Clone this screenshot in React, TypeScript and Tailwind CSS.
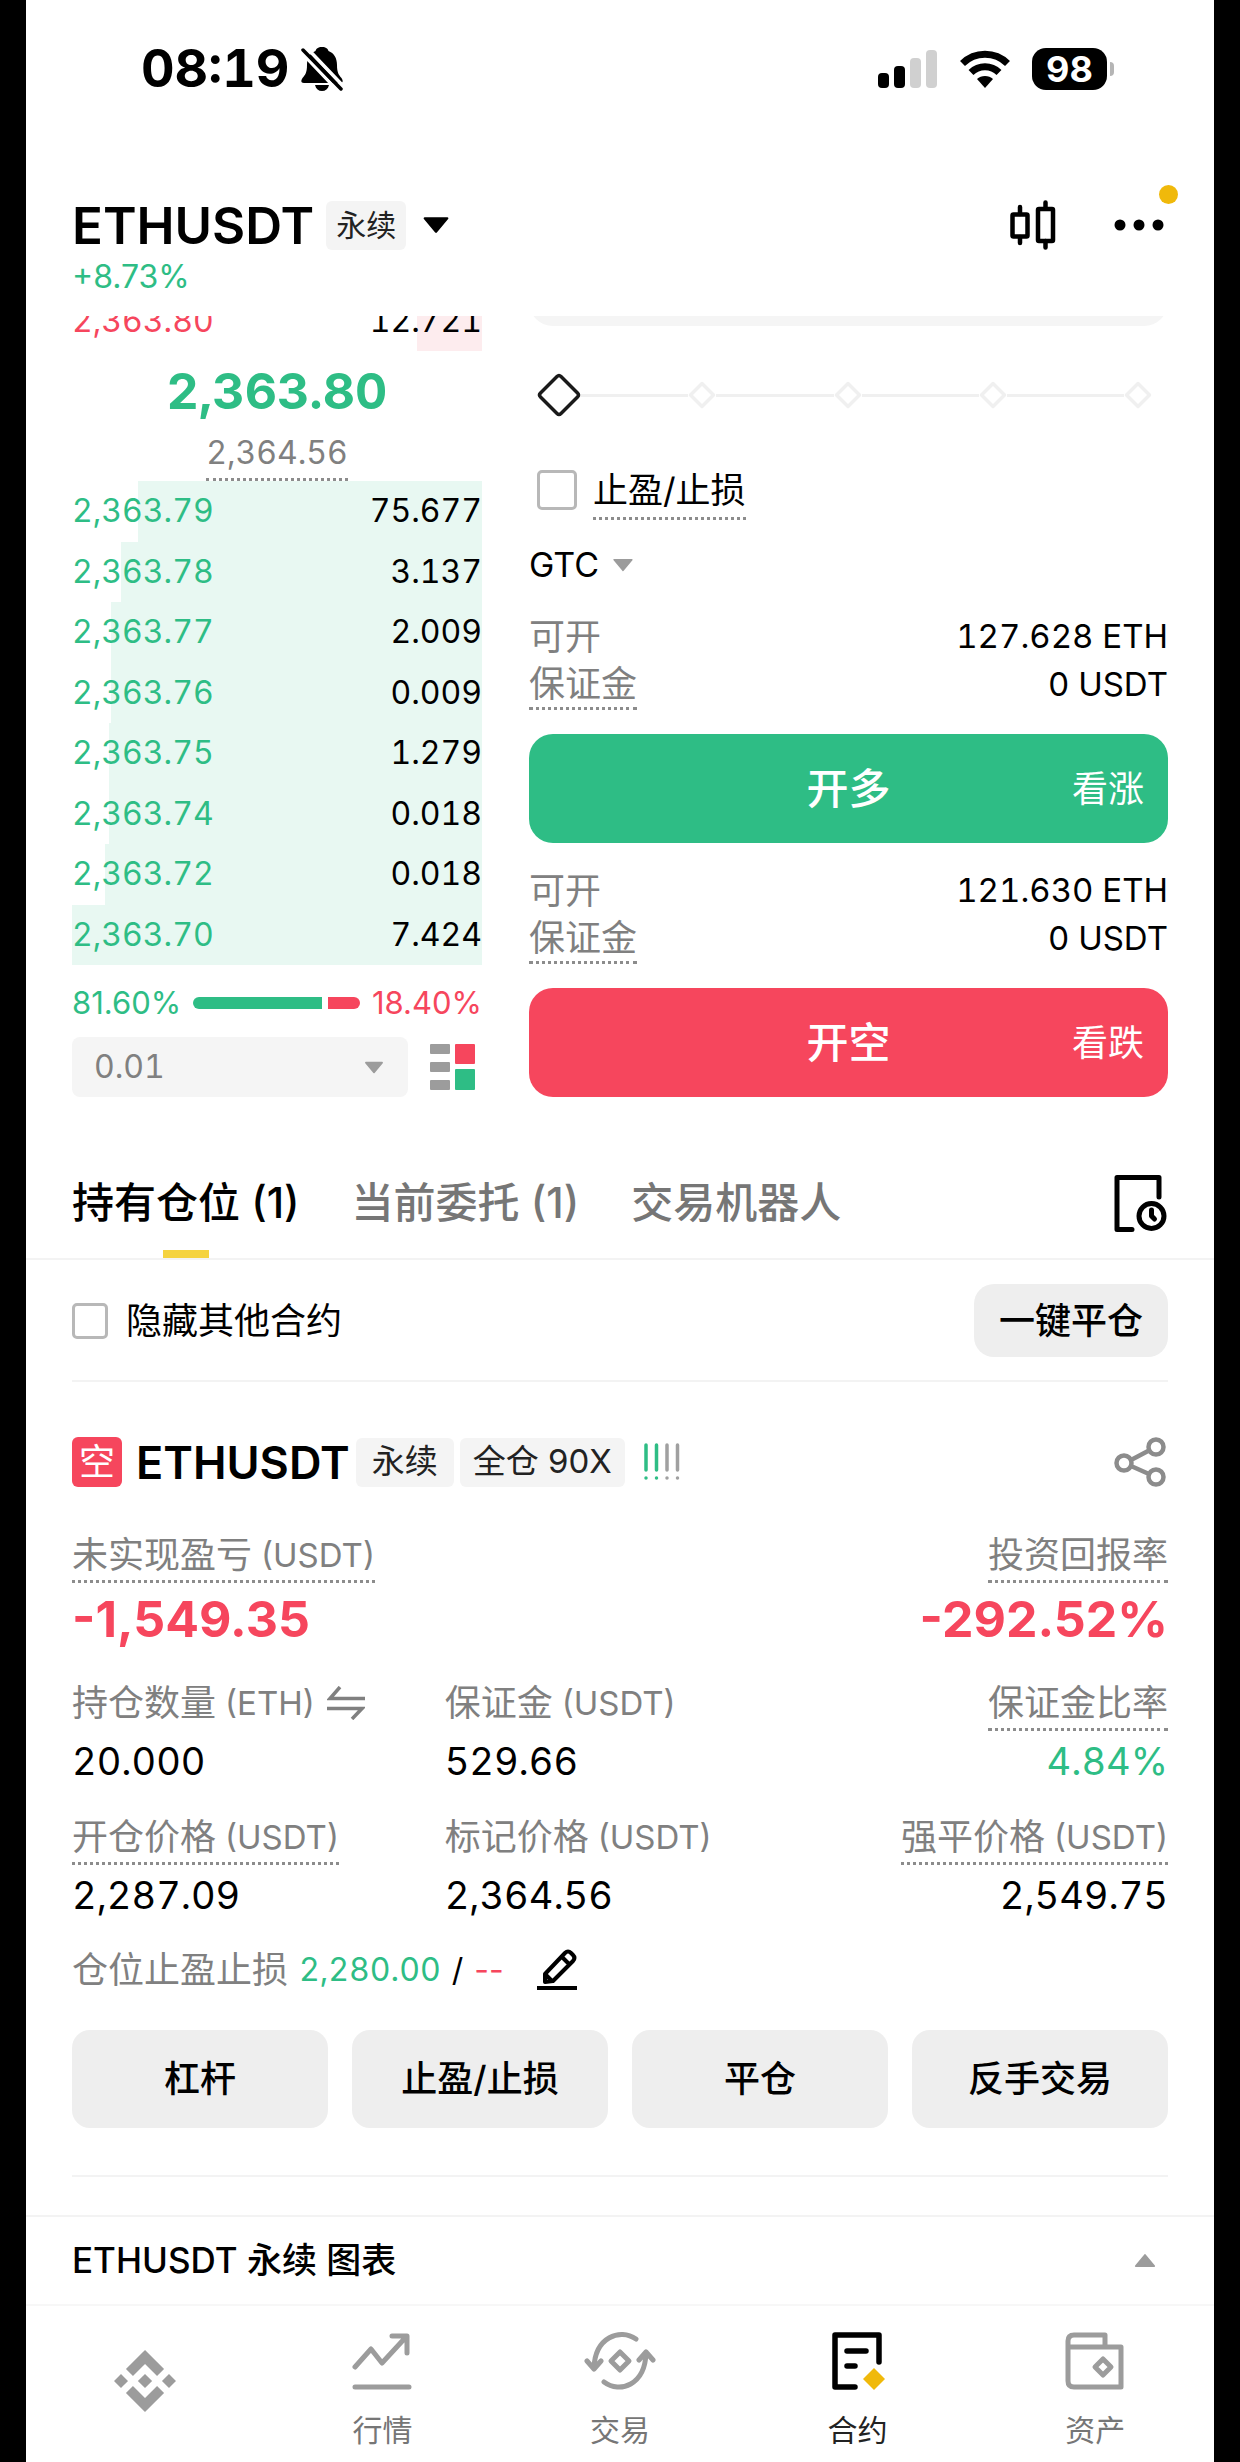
import { ReactNode } from "react";

type TOrder = { price: string; amount: string; depth: number };

const asks: TOrder[] = [{ price: "2,363.80", amount: "12.721", depth: 16 }];

const bids: TOrder[] = [
  { price: "2,363.79", amount: "75.677", depth: 84 },
  { price: "2,363.78", amount: "3.137", depth: 88 },
  { price: "2,363.77", amount: "2.009", depth: 90.5 },
  { price: "2,363.76", amount: "0.009", depth: 90.5 },
  { price: "2,363.75", amount: "1.279", depth: 91 },
  { price: "2,363.74", amount: "0.018", depth: 91 },
  { price: "2,363.72", amount: "0.018", depth: 92 },
  { price: "2,363.70", amount: "7.424", depth: 100 },
];

const Triangle = ({ className, up }: { className: string; up?: boolean }) => (
  <svg viewBox="0 0 24 16" className={className} fill="currentColor" stroke="currentColor" strokeWidth="2" strokeLinejoin="round">
    <path d={up ? "M2 14h20L12 2z" : "M2 2h20L12 14z"} />
  </svg>
);

const StatusBar = () => (
  <div className="flex h-[138px] items-center justify-between pl-[115px] pr-[100px]">
    <div className="flex items-center gap-3">
      <span className="text-[52px] font-bold leading-none tabular-nums">08:19</span>
      <svg viewBox="0 0 42 44" className="h-11 w-[42px]">
        <path
          d="M21 0c-4 0-6 2-6.500 4C9 6 6 11 6 18c0 8-2 10-4.500 13C-.5 34 0 36 3 36h36c3 0 3.500-2 1.500-5C38 28 36 26 36 18c0-7-3-12-8.500-14C27 2 25 0 21 0z"
          fill="black"
        />
        <path d="M14 38h14c-1 4-3.500 6-7 6s-6-2-7-6z" fill="black" />
        <path d="M-1 4l40 42M5 0l40 42" stroke="white" strokeWidth="3.500" />
        <path d="M2 3l38 39" stroke="black" strokeWidth="3.500" strokeLinecap="round" />
      </svg>
    </div>
    <div className="flex items-center">
      <svg viewBox="0 0 60 38" className="mr-[22px] h-[38px] w-[60px]">
        <rect x="0" y="23" width="11" height="15" rx="4" />
        <rect x="16" y="16" width="11" height="22" rx="4" />
        <rect x="32" y="8" width="11" height="30" rx="4" fill="#d0d0d0" />
        <rect x="48" y="0" width="11" height="38" rx="4" fill="#d0d0d0" />
      </svg>
      <svg viewBox="0 0 50 38" className="mr-[22px] h-[38px] w-[50px]" fill="none" stroke="black" strokeWidth="7">
        <path d="M2.500 13.500a32 32 0 0 1 45 0M11 22.500a20 20 0 0 1 28 0" />
        <path d="M25 38l-8-9c4-4 12-4 16 0z" fill="black" stroke="none" />
      </svg>
      <span className="flex h-[42px] w-[75px] items-center justify-center rounded-[14px] bg-black text-[36px] font-bold leading-none text-white">
        98
      </span>
      <span className="ml-[3px] h-[14px] w-1 rounded-r-full bg-[#b5b5b5]" />
    </div>
  </div>
);

const Header = () => (
  <header className="px-[46px] pb-[19px] pt-[60px]">
    <div className="flex h-[54px] items-center">
      <button className="flex items-center">
        <span className="text-[51px] font-semibold leading-none">ETHUSDT</span>
        <span className="ml-3 flex h-[49px] items-center rounded-md bg-[#f4f4f4] px-[10px] text-[30px] text-[#222]">
          永续
        </span>
        <Triangle className="ml-4 h-[18px] w-7" />
      </button>
      <button className="ml-auto" aria-label="K线">
        <svg viewBox="0 0 46 50" className="h-[50px] w-[46px]" fill="none" stroke="black" strokeWidth="4.500" strokeLinecap="round" strokeLinejoin="round">
          <rect x="2.500" y="14.500" width="15" height="22" rx="1" />
          <path d="M10 7v7M10 37v6" />
          <rect x="28" y="9" width="15" height="32" rx="1" />
          <path d="M35.500 2.500v6M35.500 41v6.500" />
        </svg>
      </button>
      <button className="relative ml-[58px]" aria-label="更多">
        <svg viewBox="0 0 50 12" className="mr-1 h-3 w-[50px]">
          <circle cx="6" cy="6" r="5.500" />
          <circle cx="25" cy="6" r="5.500" />
          <circle cx="44" cy="6" r="5.500" />
        </svg>
        <span className="absolute -right-[10px] -top-[34px] size-[19px] rounded-full bg-[#f0b90b]" />
      </button>
    </div>
    <p className="mt-[5px] text-[32px] leading-10 text-[#2ebd85]">+8.73%</p>
  </header>
);

const OrderTable = ({ orders, type, className }: { orders: TOrder[]; type: "ask" | "bid"; className: string }) => (
  <table className={`${className} w-full shrink-0 border-collapse text-[32px] leading-10 tabular-nums`}>
    <tbody>
      {orders.map((order) => (
        <tr
          key={order.price}
          style={{
            background: `linear-gradient(to left, ${type === "ask" ? "#fdecee" : "#e8f8f2"} ${order.depth}%, transparent ${order.depth}%)`,
          }}
        >
          <td className={`${type === "ask" ? "text-[#f6465d]" : "text-[#2ebd85]"} p-0`}>{order.price}</td>
          <td className="p-0 text-right">{order.amount}</td>
        </tr>
      ))}
    </tbody>
  </table>
);

const OrderBook = () => (
  <section className="flex w-[410px] flex-col">
    <div className="flex h-[35px] flex-col justify-end overflow-hidden">
      <OrderTable orders={asks} type="ask" className="h-[60px]" />
    </div>
    <p className="mt-[10px] text-center text-[50px] font-bold leading-[60px] tabular-nums text-[#2ebd85]">2,363.80</p>
    <p className="mt-[10px] self-center border-b-[3px] border-dotted border-[#8c8c8c] pb-[3px] text-[32px] leading-[44px] tabular-nums text-[#808080]">
      2,364.56
    </p>
    <OrderTable orders={bids} type="bid" className="h-[484px]" />
    <div className="mt-[18px] flex items-center text-[31px] leading-10">
      <span className="text-[#2ebd85]">81.60%</span>
      <div className="mx-3 flex flex-1 gap-[6px]">
        <span className="h-3 rounded-l-full bg-[#2ebd85]" style={{ flexGrow: 80 }} />
        <span className="h-3 rounded-r-full bg-[#f6465d]" style={{ flexGrow: 20 }} />
      </div>
      <span className="text-[#f6465d]">18.40%</span>
    </div>
    <div className="mt-[14px] flex items-center">
      <div className="relative flex-1">
        <select
          aria-label="价格精度"
          className="h-[60px] w-full appearance-none rounded-lg bg-[#f5f5f5] px-[22px] text-[32px] tabular-nums text-[#808080]"
        >
          <option>0.01</option>
        </select>
        <Triangle className="pointer-events-none absolute right-6 top-6 h-[13px] w-5 text-[#9c9c9c]" />
      </div>
      <button className="ml-[22px] mr-[6px]" aria-label="盘口样式">
        <svg viewBox="0 0 46 46" className="size-[46px]">
          <g fill="#9c9c9c">
            <rect y="0" width="20" height="10" rx="1" />
            <rect y="18" width="20" height="10" rx="1" />
            <rect y="36" width="20" height="10" rx="1" />
          </g>
          <rect x="25" y="0" width="20" height="20" rx="1" fill="#f6465d" />
          <rect x="25" y="25" width="20" height="21" rx="1" fill="#2ebd85" />
        </svg>
      </button>
    </div>
  </section>
);

const LeverageSlider = () => (
  <div className="relative mt-[47px] flex h-11 items-center pl-[18px] pr-4">
    <span className="flex w-6 justify-center">
      <svg viewBox="0 0 44 44" className="relative size-11 shrink-0">
        <path d="M20 3.500Q22 1.500 24 3.500L40.500 20Q42.500 22 40.500 24L24 40.500Q22 42.500 20 40.500L3.500 24Q1.500 22 3.500 20z" fill="white" stroke="#1a1a1a" strokeWidth="3.500" />
      </svg>
    </span>
    {[25, 50, 75, 100].map((step) => (
      <span key={step} className="flex flex-1 items-center">
        <span className="h-[3px] flex-1 bg-[#f0f0f0]" />
        <svg viewBox="0 0 28 28" className="size-7 shrink-0" fill="none" stroke="#f0f0f0" strokeWidth="3.500" strokeLinejoin="round">
          <path d="M14 2.500L25.500 14 14 25.500 2.500 14z" />
        </svg>
      </span>
    ))}
    <input type="range" min="0" max="100" defaultValue="0" step="25" aria-label="仓位比例" className="absolute inset-0 h-full w-full opacity-0" />
  </div>
);

type TOpenOrder = { type: "long" | "short"; available: string; title: string; hint: string };

const OpenOrder = ({ type, available, title, hint }: TOpenOrder) => (
  <div>
    <div className="flex h-12 items-center justify-between">
      <span className="text-[36px] text-[#808080]">可开</span>
      <span className="text-[33px] tabular-nums">{available}</span>
    </div>
    <div className="flex h-12 items-center justify-between">
      <span className="border-b-[3px] border-dotted border-[#8c8c8c] text-[36px] leading-[46px] text-[#808080]">保证金</span>
      <span className="text-[33px] tabular-nums">0 USDT</span>
    </div>
    <button
      className={`${
        type === "long" ? "bg-[#2ebd85]" : "bg-[#f6465d]"
      } relative mt-[25px] flex h-[109px] w-full items-center justify-center rounded-[24px] text-[42px] font-medium text-white`}
    >
      {title}
      <span className="absolute right-6 text-[36px] font-normal">{hint}</span>
    </button>
  </div>
);

const OrderForm = () => (
  <section className="ml-[47px] flex-1">
    {/* bottom edge of the amount field, scrolled under the header */}
    <div className="flex h-[10px] flex-col justify-end overflow-hidden">
      <div className="h-[60px] shrink-0 rounded-[24px] bg-[#f5f5f5]" />
    </div>
    <LeverageSlider />
    <label className="mt-[49px] flex items-start pl-2">
      <input type="checkbox" className="mt-1 size-10 appearance-none rounded-[5px] border-[3px] border-[#b8b8b8] bg-white" />
      <span className="ml-4 border-b-[3px] border-dotted border-[#8c8c8c] pb-[3px] text-[35px] leading-[48px]">止盈/止损</span>
    </label>
    <div className="mt-[25px] flex items-center">
      <select aria-label="有效方式" className="appearance-none text-[34px] leading-10">
        <option>GTC</option>
      </select>
      <Triangle className="ml-3 h-[14px] w-[22px] text-[#9c9c9c]" />
    </div>
    <div className="mt-7 flex flex-col gap-6">
      <OpenOrder type="long" available="127.628 ETH" title="开多" hint="看涨" />
      <OpenOrder type="short" available="121.630 ETH" title="开空" hint="看跌" />
    </div>
  </section>
);

const Tabs = () => (
  <div className="mt-[50px] flex h-[113px] items-center gap-[52px] border-b-2 border-[#f3f3f3] px-[46px] text-[42px] font-medium text-[#767676]">
    <button className="relative h-full text-black">
      持有仓位 (1)
      <span className="absolute bottom-0 left-1/2 h-2 w-[46px] -translate-x-1/2 bg-[#f5d33f]" />
    </button>
    <button>当前委托 (1)</button>
    <button>交易机器人</button>
    <button className="ml-auto" aria-label="历史">
      <svg viewBox="0 0 54 58" className="h-[58px] w-[54px]" fill="none" stroke="black" strokeWidth="5" strokeLinecap="round" strokeLinejoin="round">
        <path d="M45 23V3.500H3v52h15" />
        <circle cx="37.500" cy="42" r="12.500" />
        <path d="M37.500 36v6l3 3" />
      </svg>
    </button>
  </div>
);

type TMetric = {
  label: string;
  unit?: string;
  value: string;
  underline?: boolean;
  right?: boolean;
  large?: boolean;
  color?: "green" | "red";
  icon?: ReactNode;
};

const Metric = ({ label, unit, value, underline, right, large, color, icon }: TMetric) => (
  <div className={`flex flex-col ${right ? "items-end" : "items-start"}`}>
    <dt
      className={`${
        underline ? "border-[#8c8c8c]" : "border-transparent"
      } flex items-center border-b-[3px] border-dotted pb-[3px] text-[36px] leading-[44px] text-[#808080]`}
    >
      {label}
      {unit && <span className="ml-[9px] text-[33px]">({unit})</span>}
      {icon}
    </dt>
    <dd
      className={`${
        color === "green" ? "text-[#2ebd85]" : color === "red" ? "text-[#f6465d]" : "text-black"
      } ${large ? "text-[50px] font-bold leading-[60px]" : "text-[38px] leading-[48px] tabular-nums"} mt-[6px]`}
    >
      {value}
    </dd>
  </div>
);

const SwapIcon = () => (
  <svg viewBox="0 0 38 34" className="ml-3 h-[34px] w-[38px]" fill="none" stroke="#808080" strokeWidth="3.500">
    <path d="M13 1L3 12.500h35M0 22.500h35L25 33" />
  </svg>
);

const Position = () => (
  <section className="px-[46px]">
    <div className="mt-[55px] flex h-[50px] items-center">
      <span className="flex size-[50px] items-center justify-center rounded-md bg-[#f6465d] text-[36px] leading-none text-white">空</span>
      <h2 className="ml-[14px] text-[45px] font-semibold leading-none">ETHUSDT</h2>
      <span className="ml-[6px] flex h-[49px] items-center rounded-md bg-[#f4f4f4] px-4 text-[33px] text-[#222]">永续</span>
      <span className="ml-[6px] flex h-[49px] items-center rounded-md bg-[#f4f4f4] px-[13px] text-[33px] text-[#222]">全仓 90X</span>
      <svg viewBox="0 0 40 38" className="ml-[18px] h-[38px] w-10" strokeWidth="3.500" strokeLinecap="round">
        <path d="M3 2v25M3 35v.1M13.500 2v25M13.500 35v.1" stroke="#2ebd85" />
        <path d="M24 2v25M24 35v.1M34.500 2v25M34.500 35v.1" stroke="#a0a0a0" />
      </svg>
      <button className="ml-auto" aria-label="分享">
        <svg viewBox="0 0 54 50" className="h-[50px] w-[54px]" fill="none" stroke="#8c8c8c" strokeWidth="4.500">
          <circle cx="10" cy="26" r="7.500" />
          <circle cx="42" cy="10" r="7.500" />
          <circle cx="42" cy="40" r="7.500" />
          <path d="M17 23l18-9.500M17 29l18 8" />
        </svg>
      </button>
    </div>
    <dl className="mt-[46px] flex justify-between">
      <Metric label="未实现盈亏" unit="USDT" value="-1,549.35" underline large color="red" />
      <Metric label="投资回报率" value="-292.52%" underline right large color="red" />
    </dl>
    <dl className="mt-8 grid grid-cols-[34%_1fr_auto] gap-y-[30px]">
      <Metric label="持仓数量" unit="ETH" value="20.000" icon={<SwapIcon />} />
      <Metric label="保证金" unit="USDT" value="529.66" />
      <Metric label="保证金比率" value="4.84%" underline right color="green" />
      <Metric label="开仓价格" unit="USDT" value="2,287.09" underline />
      <Metric label="标记价格" unit="USDT" value="2,364.56" />
      <Metric label="强平价格" unit="USDT" value="2,549.75" underline right />
    </dl>
    <div className="mt-[29px] flex h-11 items-center gap-[11px] text-[32px]">
      <span className="text-[36px] text-[#808080]">仓位止盈止损</span>
      <span className="tabular-nums text-[#2ebd85]">2,280.00</span>
      <span>/</span>
      <span className="text-[#f6465d]">--</span>
      <button className="ml-[22px]" aria-label="编辑">
        <svg viewBox="0 0 40 42" className="h-[42px] w-10" fill="none" stroke="black" strokeWidth="4" strokeLinejoin="round">
          <path d="M8 33V25L28 4q3-3 6 0l2 2q3 3 0 6L16 32zM25 8l8 8M9 26l6 6" />
          <path d="M0 39h40" />
        </svg>
      </button>
    </div>
    <div className="mt-[38px] grid grid-cols-4 gap-6">
      {["杠杆", "止盈/止损", "平仓", "反手交易"].map((action) => (
        <button key={action} className="h-[98px] rounded-[18px] bg-[#eee] text-[36px] font-medium">
          {action}
        </button>
      ))}
    </div>
    <hr className="mt-[47px] border-t-2 border-[#f3f3f3]" />
  </section>
);

const navItems = [
  {
    label: "行情",
    icon: (
      <svg viewBox="0 0 60 58" className="h-[58px] w-[60px]" fill="none" stroke="currentColor" strokeWidth="5" strokeLinecap="round" strokeLinejoin="round">
        <path d="M3 35l16-18 11 14L54 5M40 4h15v17M3 55h54" />
      </svg>
    ),
  },
  {
    label: "交易",
    icon: (
      <svg viewBox="0 0 72 60" className="h-[60px] w-[72px]" fill="none" stroke="currentColor" strokeWidth="5" strokeLinecap="round" strokeLinejoin="round">
        <path d="M52 8C36-3 11 6 10 37M3 30l7 8 7-8" />
        <path d="M20 51C36 63 61 54 62 22M55 29l7-8 7 8" />
        <path d="M36 21l9 9-9 9-9-9z" />
      </svg>
    ),
  },
  {
    label: "合约",
    active: true,
    icon: (
      <svg viewBox="0 0 54 58" className="h-[58px] w-[54px]" fill="none" stroke="currentColor" strokeWidth="5.500" strokeLinecap="round" strokeLinejoin="round">
        <path d="M48 30V3H4v52h20M16 19h19M16 34h8" />
        <path d="M43 36l11 11-11 11-11-11z" fill="#f0b90b" stroke="none" />
      </svg>
    ),
  },
  {
    label: "资产",
    icon: (
      <svg viewBox="0 0 60 58" className="h-[58px] w-[60px]" fill="none" stroke="currentColor" strokeWidth="5" strokeLinejoin="round">
        <path d="M40 15V3H9Q3 3 3 9v40q0 6 6 6h47V15H3" />
        <path d="M38 27l8 8-8 8-8-8z" />
      </svg>
    ),
  },
];

const BottomNav = () => (
  <nav className="grid grid-cols-5 border-t-2 border-[#f7f7f7] pb-[9px] pt-[22px] text-[30px] text-[#9c9c9c]">
    <a href="#" aria-label="首页" className="flex items-start justify-center pt-[22px]">
      <svg viewBox="0 0 126.610 126.610" className="size-[62px]" fill="currentColor">
        <path d="M38.730 53.200l24.590-24.580 24.600 24.600 14.300-14.310L63.320 0l-38.900 38.900zM0 63.310L14.300 49l14.310 14.310L14.300 77.610zM38.730 73.410l24.590 24.590 24.600-24.600 14.310 14.290-38.910 38.910-38.910-38.880zM98 63.310L112.300 49l14.310 14.300-14.310 14.320zM77.830 63.300L63.320 48.780 48.780 63.310l14.540 14.510z" />
      </svg>
    </a>
    {navItems.map((item) => (
      <a key={item.label} href="#" className={`${item.active ? "text-black" : ""} flex flex-col items-center`}>
        <span className="flex h-[66px] items-center">{item.icon}</span>
        <span className={`${item.active ? "text-[#222]" : "text-[#767676]"} mt-4 leading-10`}>{item.label}</span>
      </a>
    ))}
  </nav>
);

const App = () => {
  return (
    <div className="min-h-screen bg-black px-[26px] font-['Inter','Noto_Sans_CJK_SC',sans-serif] text-black">
      <main className="min-h-screen bg-white">
        <StatusBar />
        <Header />
        <div className="flex px-[46px]">
          <OrderBook />
          <OrderForm />
        </div>
        <Tabs />
        <div className="mx-[46px] flex items-center justify-between border-b-2 border-[#f3f3f3] pb-[23px] pt-6">
          <label className="flex items-center gap-[18px] text-[36px]">
            <input type="checkbox" className="size-9 appearance-none rounded-[5px] border-[3px] border-[#b8b8b8] bg-white" />
            隐藏其他合约
          </label>
          <button className="h-[73px] rounded-[20px] bg-[#eee] px-[25px] text-[36px] font-medium">一键平仓</button>
        </div>
        <Position />
        <button className="mt-[38px] flex h-[89px] w-full items-center justify-between border-t-2 border-[#f3f3f3] pl-[46px] pr-[58px] text-[35px] font-medium">
          ETHUSDT 永续 图表
          <Triangle up className="h-[15px] w-[22px] text-[#9c9c9c]" />
        </button>
        <BottomNav />
      </main>
    </div>
  );
};

export default App;
